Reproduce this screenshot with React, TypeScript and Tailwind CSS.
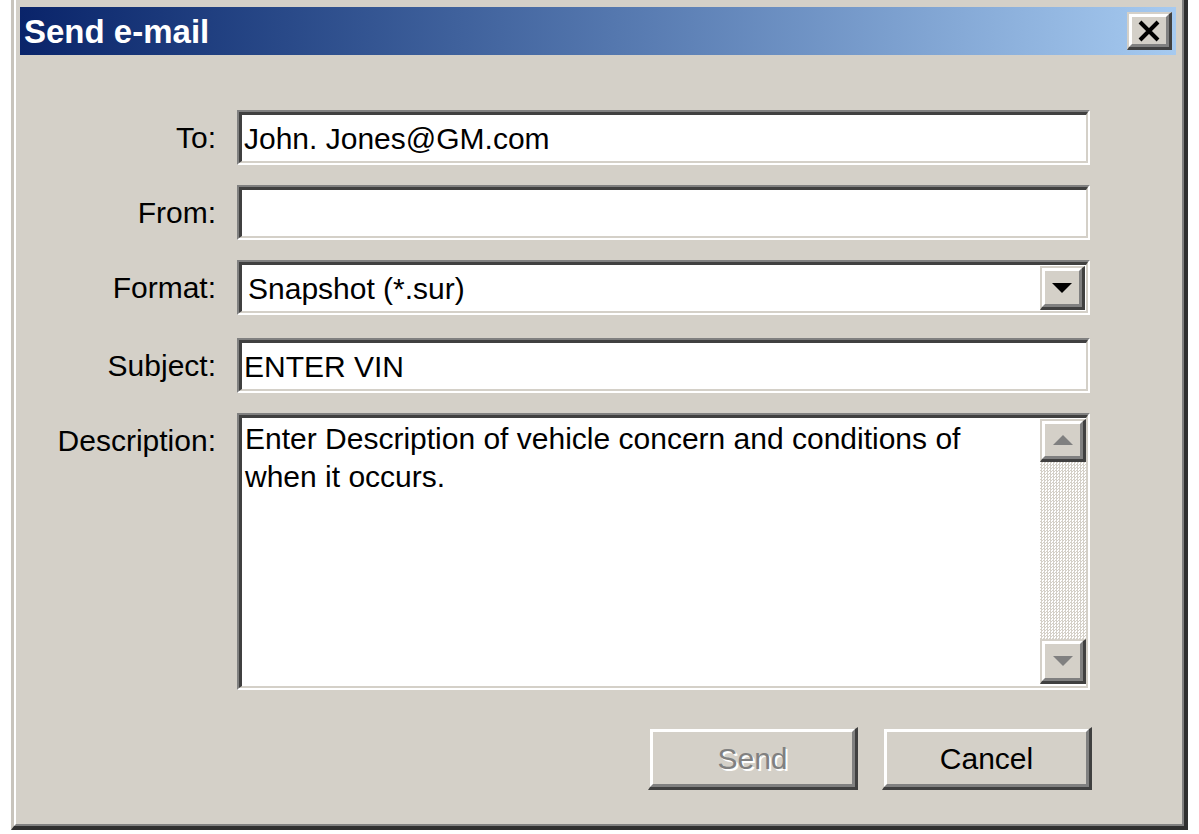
const sunkenOuter =
  "border-t-2 border-l-2 border-b-2 border-r-2 border-t-[#808080] border-l-[#808080] border-b-white border-r-white";
const sunkenInner =
  "h-full border-t-[3px] border-l-[3px] border-b-2 border-r-2 border-t-[#404040] border-l-[#404040] border-b-[#d4d0c8] border-r-[#d4d0c8] bg-white";
const raisedOuter =
  "border-t-2 border-l-2 border-b-[3px] border-r-[3px] border-t-[#d4d0c8] border-l-[#d4d0c8] border-b-[#404040] border-r-[#404040] bg-[#d4d0c8]";
const raisedInner =
  "h-full w-full border-t-[3px] border-l-[3px] border-b-[3px] border-r-[3px] border-t-white border-l-white border-b-[#808080] border-r-[#808080] flex items-center justify-center";

const Label = ({ text, top = false }: { text: string; top?: boolean }) => (
  <div
    className={`w-[196px] shrink-0 text-right text-[30px] leading-none text-black ${
      top ? "pt-[13px]" : ""
    }`}
  >
    {text}
  </div>
);

const TextBox = ({ value }: { value?: string }) => (
  <div className={`h-[55px] w-[853px] ${sunkenOuter}`}>
    <div className={`${sunkenInner} flex items-center pl-[2px] text-[30px] text-black`}>
      {value}
    </div>
  </div>
);

const ArrowDown = ({ color }: { color: string }) => (
  <svg width="22" height="12" viewBox="0 0 22 12">
    <polygon points="1,1 21,1 11,11" fill={color} />
  </svg>
);

const ArrowUp = ({ color }: { color: string }) => (
  <svg width="22" height="12" viewBox="0 0 22 12">
    <polygon points="1,11 21,11 11,1" fill={color} />
  </svg>
);

export default function App() {
  return (
    <div className="h-[834px] w-[1199px] overflow-hidden bg-white font-['Liberation_Sans',Arial,sans-serif]">
      <div className="ml-[11px] h-[830px] w-[1177px] border-l-[3px] border-r-[4px] border-b-[4px] border-l-[#c8c4bc] border-r-[#303030] border-b-[#303030]">
        <div className="h-full border-l-2 border-r-2 border-b-2 border-l-white border-r-[#808080] border-b-[#808080] bg-[#d4d0c8] pt-[7px] pl-[4px] pr-[6px]">
          {/* title bar */}
          <div className="flex h-[48px] items-center justify-between bg-gradient-to-r from-[#0a246a] to-[#a6caf0] pl-[4px] pr-[4px]">
            <span className="text-[33px] font-bold leading-none text-white">
              Send e-mail
            </span>
            <div className={`h-[38px] w-[45px] ${raisedOuter}`}>
              <div className={raisedInner}>
                <svg width="24" height="22" viewBox="0 0 24 22">
                  <path d="M3 2 L21 20 M21 2 L3 20" stroke="#000" strokeWidth="4" />
                </svg>
              </div>
            </div>
          </div>

          {/* form */}
          <div className="mt-[55px] flex flex-col">
            <div className="flex items-center gap-[21px]">
              <Label text="To:" />
              <TextBox value="John. Jones@GM.com" />
            </div>
            <div className="mt-[20px] flex items-center gap-[21px]">
              <Label text="From:" />
              <TextBox />
            </div>
            <div className="mt-[20px] flex items-center gap-[21px]">
              <Label text="Format:" />
              <div className={`h-[55px] w-[853px] ${sunkenOuter}`}>
                <div className={`${sunkenInner} flex items-center text-[30px] text-black`}>
                  <span className="flex-1 pl-[6px]">Snapshot (*.sur)</span>
                  <div className={`mr-[1px] h-[44px] w-[45px] ${raisedOuter}`}>
                    <div className={raisedInner}>
                      <ArrowDown color="#000" />
                    </div>
                  </div>
                </div>
              </div>
            </div>
            <div className="mt-[23px] flex items-center gap-[21px]">
              <Label text="Subject:" />
              <TextBox value="ENTER VIN" />
            </div>
            <div className="mt-[20px] flex items-start gap-[21px]">
              <Label text="Description:" top />
              <div className={`h-[277px] w-[853px] ${sunkenOuter}`}>
                <div className={`${sunkenInner} flex`}>
                  <div className="flex-1 whitespace-nowrap pl-[3px] pt-[2px] text-[30px] leading-[38px] text-black">
                    Enter Description of vehicle concern and conditions of
                    <br />
                    when it occurs.
                  </div>
                  <div className="flex w-[46px] flex-col pt-[1px] pb-[2px]">
                    <div className={`h-[43px] w-full ${raisedOuter}`}>
                      <div className={raisedInner}>
                        <ArrowUp color="#808080" />
                      </div>
                    </div>
                    <div className="flex-1 bg-[image:repeating-conic-gradient(#d4d0c8_0_25%,#ffffff_0_50%)] bg-[length:3px_3px]" />
                    <div className={`h-[45px] w-full ${raisedOuter}`}>
                      <div className={raisedInner}>
                        <ArrowDown color="#808080" />
                      </div>
                    </div>
                  </div>
                </div>
              </div>
            </div>

            {/* buttons */}
            <div className="mt-[37px] flex gap-[24px] pl-[628px]">
              <div className={`h-[63px] w-[210px] ${raisedOuter}`}>
                <div className={`${raisedInner} text-[30px] text-[#808080] [text-shadow:2px_2px_0_#ffffff]`}>
                  Send
                </div>
              </div>
              <div className={`h-[63px] w-[210px] ${raisedOuter}`}>
                <div className={`${raisedInner} text-[30px] text-black`}>Cancel</div>
              </div>
            </div>
          </div>
        </div>
      </div>
    </div>
  );
}
